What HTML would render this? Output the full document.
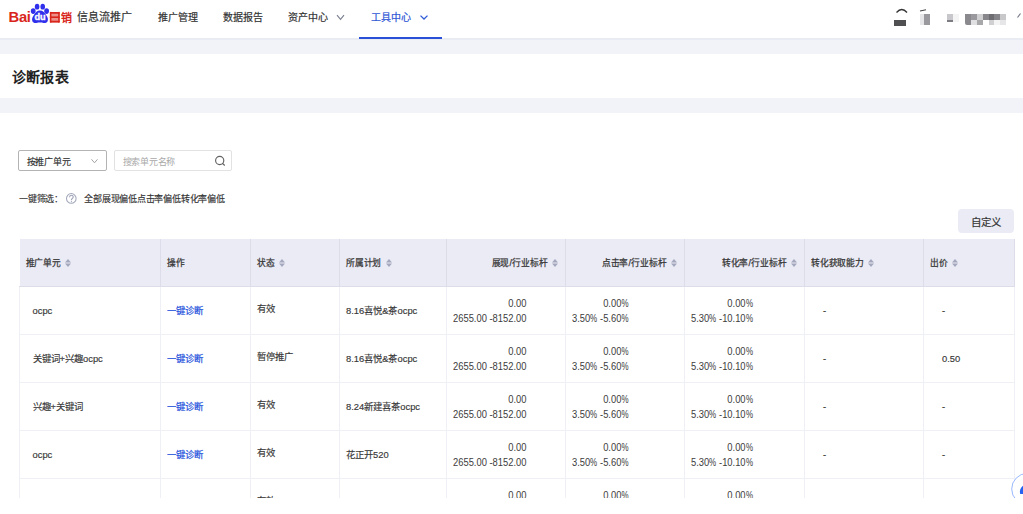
<!DOCTYPE html>
<html lang="zh-CN">
<head>
<meta charset="utf-8">
<style>
*{margin:0;padding:0;box-sizing:border-box;}
html,body{width:1023px;height:514px;overflow:hidden;background:#fff;}
body{font-family:"Liberation Sans",sans-serif;color:#333;position:relative;}
.abs{position:absolute;white-space:nowrap;}
body>svg{position:absolute;overflow:visible;}
#hdr{position:absolute;left:0;top:0;width:1023px;height:40px;background:#fff;border-bottom:2px solid #eaecf3;}
#band1{position:absolute;left:0;top:40px;width:1023px;height:14px;background:#f2f3f8;}
#band2{position:absolute;left:0;top:98px;width:1023px;height:15px;background:#f2f3f8;}
.nav{font-size:10px;color:#333;top:11px;line-height:13px;-webkit-text-stroke:0.2px currentColor;}
.navsel{color:#2d56d6;}
.title{font-size:14px;font-weight:bold;color:#222;left:11.5px;top:68.7px;line-height:17px;letter-spacing:0.35px;}
.sm{font-size:9px;line-height:11px;letter-spacing:-0.22px;}
.blk{position:absolute;}
.md{-webkit-text-stroke:0.15px currentColor;}
table{border-collapse:collapse;position:absolute;left:19px;top:239px;table-layout:fixed;}
th{background:#ebebf5;height:47px;font-size:8.75px;font-weight:normal;-webkit-text-stroke:0.25px #383838;color:#383838;text-align:left;padding:0 0 0 6px;letter-spacing:-0.2px;border-left:1px solid #dcdde9;border-bottom:1px solid #dcdde9;white-space:nowrap;}
th:first-child{border-left:none;}
th:last-child{border-right:1px solid #dcdde9;}
td{height:48px;font-size:9.4px;color:#383838;-webkit-text-stroke:0.15px currentColor;border-left:1px solid #efeff6;border-bottom:1px solid #efeff6;white-space:nowrap;padding:0 0 0 6px;}
td:first-child{padding-left:12.5px;}
td:last-child{border-right:1px solid #efeff6;}
.r{text-align:right;padding-right:7px;}
.so{display:inline-block;width:6px;height:8px;margin-left:4.5px;vertical-align:-1px;position:relative;top:0.25px;}
.lnk{color:#2350dc;-webkit-text-stroke:0.2px #2350dc;}
.num{display:inline-block;text-align:right;font-size:10.2px;line-height:14.5px;vertical-align:middle;padding-top:1px;position:relative;top:1px;transform:scaleX(0.92);transform-origin:0 50%;-webkit-text-stroke:0;color:#3c3c3c;}
.p{font-style:normal;display:inline-block;transform:scaleX(0.85);margin:0 -0.65px;}
.sl{font-style:normal;margin:0 0.5px 0 0.3px;}
.st{position:relative;top:-2px;}
</style>
</head>
<body>
<div id="hdr"></div>
<div id="band1"></div>
<div class="abs title">诊断报表</div>
<div id="band2"></div>

<!-- logo -->
<div class="abs" style="left:8.5px;top:10px;font-size:14.8px;font-weight:bold;color:#d9261c;line-height:15px;letter-spacing:-0.3px;">Bai</div>
<svg style="left:0;top:0;" width="80" height="30" viewBox="0 0 80 30">
  <ellipse cx="37.1" cy="6.7" rx="2.3" ry="2.9" fill="#3030ec"/>
  <ellipse cx="42.7" cy="6.7" rx="2.3" ry="2.9" fill="#3030ec"/>
  <ellipse cx="33.2" cy="11.1" rx="2.4" ry="2.8" fill="#3030ec"/>
  <ellipse cx="46.6" cy="11.1" rx="2.4" ry="2.8" fill="#3030ec"/>
  <path d="M40 10.6 C37.0 10.6 35.6 12.6 34.2 14.6 C32.5 16.9 31.6 18.8 32.3 21.0 C32.9 22.8 34.8 23.2 36.5 22.9 C38.5 22.5 41.5 22.5 43.5 22.9 C45.2 23.2 47.1 22.8 47.7 21.0 C48.4 18.8 47.5 16.9 45.8 14.6 C44.4 12.6 43.0 10.6 40 10.6 Z" fill="#3030ec"/>
  <text x="39.9" y="20.4" font-family="Liberation Sans" font-weight="bold" font-size="9.2" fill="#fff" stroke="#fff" stroke-width="0.35" text-anchor="middle" letter-spacing="-0.3">du</text>
</svg>
<svg style="left:0;top:0" width="10" height="10"><rect x="49.9" y="11.9" width="9.8" height="10.7" rx="1.2" fill="#eb9189"/><rect x="49.9" y="11.9" width="9.8" height="1.9" rx="0.8" fill="#d9261c"/><rect x="49.9" y="16.4" width="9.8" height="1.6" fill="#d9261c"/><rect x="49.9" y="20.7" width="9.8" height="1.9" rx="0.8" fill="#d9261c"/><rect x="49.9" y="11.9" width="1.5" height="10.7" fill="#d9261c"/><rect x="58.2" y="11.9" width="1.5" height="10.7" fill="#d9261c"/></svg>
<div class="abs" style="left:60.5px;top:10.5px;font-size:11px;font-weight:bold;color:#d9261c;line-height:14px;">销</div>
<div class="abs nav" style="left:77px;font-size:11px;top:11px;">信息流推广</div>
<div class="abs nav" style="left:157.5px;">推广管理</div>
<div class="abs nav" style="left:222.5px;">数据报告</div>
<div class="abs nav" style="left:287.5px;">资产中心</div>
<svg style="left:0;top:0" width="10" height="10"><path d="M337 15.2 L340.5 19.3 L344 15.2" fill="none" stroke="#7a7f90" stroke-width="1.1"/></svg>
<div class="abs nav navsel" style="left:370.5px;">工具中心</div>
<svg style="left:0;top:0" width="10" height="10"><path d="M420.5 15.6 L424 19 L427.5 15.6" fill="none" stroke="#2f5bd6" stroke-width="1.3"/></svg>
<div class="abs" style="left:359px;top:37px;width:83px;height:2px;background:#2a50d8;"></div>

<!-- right header pixelated -->
<svg style="left:0;top:0" width="10" height="10"><path d="M896.5 12.5 Q901.8 6.5 907 12.5" fill="none" stroke="#333" stroke-width="1.3"/></svg>
<div class="blk" style="left:894px;top:19.5px;width:12px;height:6.5px;background:#505052;"></div>
<svg style="left:0;top:0" width="10" height="10"><path d="M920 11 L926 9.8" fill="none" stroke="#444" stroke-width="1.1"/></svg>
<div class="blk" style="left:919.5px;top:14px;width:4px;height:11px;background:#e6e6e8;"></div>
<div class="blk" style="left:923.5px;top:14px;width:6px;height:11px;background:#9a9a9e;"></div>
<div class="blk" style="left:947px;top:14px;width:6px;height:6px;background:#c8c8cc;"></div>
<div class="blk" style="left:947px;top:19.5px;width:6px;height:2.5px;background:#7c7c82;"></div>
<div class="blk" style="left:953px;top:14px;width:6px;height:8px;background:#f4f4f4;"></div>
<div class="blk" style="left:965px;top:14px;width:6px;height:11px;background:#8a8a8e;border-bottom-left-radius:2px;"></div>
<div class="blk" style="left:971px;top:14px;width:6px;height:5.5px;background:#9a9a9e;"></div>
<div class="blk" style="left:977px;top:14px;width:6px;height:5.5px;background:#d0d0d2;"></div>
<div class="blk" style="left:983px;top:14px;width:5.5px;height:5.5px;background:#88888c;"></div>
<div class="blk" style="left:988.5px;top:14px;width:5.5px;height:5.5px;background:#6e6e72;"></div>
<div class="blk" style="left:994px;top:14px;width:6px;height:5.5px;background:#86868a;"></div>
<div class="blk" style="left:1000px;top:14px;width:6px;height:5.5px;background:#c8c8ca;"></div>
<div class="blk" style="left:971px;top:19.5px;width:6px;height:5.5px;background:#e0e0e2;"></div>
<div class="blk" style="left:977px;top:19.5px;width:6px;height:5.5px;background:#a8a8aa;"></div>
<div class="blk" style="left:988.5px;top:19.5px;width:5.5px;height:5.5px;background:#d0d0d2;"></div>
<div class="blk" style="left:994px;top:19.5px;width:6px;height:5.5px;background:#f4f4f4;"></div>
<div class="blk" style="left:1000px;top:19.5px;width:6px;height:5.5px;background:#e6e6e8;"></div>
<svg style="left:0;top:0" width="10" height="10"><path d="M1017.5 17.5 L1020.5 13.5" fill="none" stroke="#6a6f80" stroke-width="1.1"/></svg>

<!-- filters -->
<div class="abs" style="left:18px;top:150px;width:89px;height:21px;border:1px solid #b4b4b4;border-radius:2px;"></div>
<div class="abs sm md" style="left:26.7px;top:156.5px;">按推广单元</div>
<svg style="left:0;top:0" width="10" height="10"><path d="M91.5 159.3 L94.5 162.8 L97.5 159.3" fill="none" stroke="#999" stroke-width="0.9"/></svg>
<div class="abs" style="left:114px;top:150px;width:118px;height:21px;border:1px solid #e2e2e2;border-radius:2px;"></div>
<div class="abs sm" style="left:122.5px;top:156.5px;color:#a8a8a8;">搜索单元名称</div>
<svg style="left:0;top:0" width="10" height="10"><circle cx="219.7" cy="160.5" r="4.1" fill="none" stroke="#626262" stroke-width="1.15"/><path d="M222.6 163.5 L224.5 165.2" stroke="#626262" stroke-width="1.15" stroke-linecap="round"/></svg>
<div class="abs sm md" style="left:19px;top:193.5px;">一键筛选：</div>
<svg style="left:0;top:0" width="10" height="10"><circle cx="71.3" cy="198.4" r="4.8" fill="none" stroke="#a3a8bb" stroke-width="1.05"/><path d="M69.5 197.2 C69.5 194.6 73.2 194.6 73.2 197.0 C73.2 198.4 71.4 198.6 71.4 200.2" fill="none" stroke="#9a9fb3" stroke-width="1.05"/><circle cx="71.4" cy="201.6" r="0.6" fill="#9a9fb3"/></svg>
<div class="abs sm md" style="left:84.2px;top:193.5px;">全部展现偏低点击率偏低转化率偏低</div>

<div class="abs" style="left:958px;top:209px;width:56px;height:24px;background:#ebebf5;border-radius:4px;"></div>
<div class="abs" style="left:970.5px;top:215.5px;font-size:10.5px;line-height:13px;-webkit-text-stroke:0.2px #333;">自定义</div>

<table>
<colgroup><col style="width:141px"><col style="width:90px"><col style="width:89px"><col style="width:107px"><col style="width:119px"><col style="width:119px"><col style="width:120px"><col style="width:119px"><col style="width:91px"></colgroup>
<tr><th>推广单元<svg class="so" viewBox="0 0 6 8"><path d="M3 0 L6 3.6 L0 3.6Z M0 4.4 L6 4.4 L3 8Z" fill="#a3a8be"/></svg></th><th>操作</th><th>状态<svg class="so" viewBox="0 0 6 8"><path d="M3 0 L6 3.6 L0 3.6Z M0 4.4 L6 4.4 L3 8Z" fill="#a3a8be"/></svg></th><th>所属计划<svg class="so" viewBox="0 0 6 8"><path d="M3 0 L6 3.6 L0 3.6Z M0 4.4 L6 4.4 L3 8Z" fill="#a3a8be"/></svg></th><th class="r">展现<i class="sl">/</i>行业标杆<svg class="so" viewBox="0 0 6 8"><path d="M3 0 L6 3.6 L0 3.6Z M0 4.4 L6 4.4 L3 8Z" fill="#a3a8be"/></svg></th><th class="r">点击率<i class="sl">/</i>行业标杆<svg class="so" viewBox="0 0 6 8"><path d="M3 0 L6 3.6 L0 3.6Z M0 4.4 L6 4.4 L3 8Z" fill="#a3a8be"/></svg></th><th class="r">转化率<i class="sl">/</i>行业标杆<svg class="so" viewBox="0 0 6 8"><path d="M3 0 L6 3.6 L0 3.6Z M0 4.4 L6 4.4 L3 8Z" fill="#a3a8be"/></svg></th><th>转化获取能力<svg class="so" viewBox="0 0 6 8"><path d="M3 0 L6 3.6 L0 3.6Z M0 4.4 L6 4.4 L3 8Z" fill="#a3a8be"/></svg></th><th>出价<svg class="so" viewBox="0 0 6 8"><path d="M3 0 L6 3.6 L0 3.6Z M0 4.4 L6 4.4 L3 8Z" fill="#a3a8be"/></svg></th></tr>
<tr><td>ocpc</td><td class="lnk">一键诊断</td><td><span class="st">有效</span></td><td>8.16喜悦&amp;茶ocpc</td><td><span class="num">0.00<br>2655.00 -8152.00</span></td><td><span class="num">0.00<i class="p">%</i><br>3.50<i class="p">%</i> -5.60<i class="p">%</i></span></td><td><span class="num">0.00<i class="p">%</i><br>5.30<i class="p">%</i> -10.10<i class="p">%</i></span></td><td style="padding-left:18px">-</td><td style="padding-left:18px">-</td></tr>
<tr><td>关键词+兴趣ocpc</td><td class="lnk">一键诊断</td><td><span class="st">暂停推广</span></td><td>8.16喜悦&amp;茶ocpc</td><td><span class="num">0.00<br>2655.00 -8152.00</span></td><td><span class="num">0.00<i class="p">%</i><br>3.50<i class="p">%</i> -5.60<i class="p">%</i></span></td><td><span class="num">0.00<i class="p">%</i><br>5.30<i class="p">%</i> -10.10<i class="p">%</i></span></td><td style="padding-left:18px">-</td><td style="padding-left:18px">0.50</td></tr>
<tr><td>兴趣+关键词</td><td class="lnk">一键诊断</td><td><span class="st">有效</span></td><td>8.24新建喜茶ocpc</td><td><span class="num">0.00<br>2655.00 -8152.00</span></td><td><span class="num">0.00<i class="p">%</i><br>3.50<i class="p">%</i> -5.60<i class="p">%</i></span></td><td><span class="num">0.00<i class="p">%</i><br>5.30<i class="p">%</i> -10.10<i class="p">%</i></span></td><td style="padding-left:18px">-</td><td style="padding-left:18px">-</td></tr>
<tr><td>ocpc</td><td class="lnk">一键诊断</td><td><span class="st">有效</span></td><td>花正开520</td><td><span class="num">0.00<br>2655.00 -8152.00</span></td><td><span class="num">0.00<i class="p">%</i><br>3.50<i class="p">%</i> -5.60<i class="p">%</i></span></td><td><span class="num">0.00<i class="p">%</i><br>5.30<i class="p">%</i> -10.10<i class="p">%</i></span></td><td style="padding-left:18px">-</td><td style="padding-left:18px">-</td></tr>
<tr><td></td><td></td><td><span class="st">有效</span></td><td></td><td><span class="num">0.00<br>2655.00 -8152.00</span></td><td><span class="num">0.00<i class="p">%</i><br>3.50<i class="p">%</i> -5.60<i class="p">%</i></span></td><td><span class="num">0.00<i class="p">%</i><br>5.30<i class="p">%</i> -10.10<i class="p">%</i></span></td><td></td><td></td></tr>
</table>
<svg style="left:0;top:0" width="10" height="10"><circle cx="1027.3" cy="489" r="15.6" fill="#fff" stroke="#8fb0ff" stroke-width="0.9"/><path d="M1020.2 494 C1019.2 490.5 1020.8 487.3 1023 485.7 L1023 494 Z" fill="#2563f0"/></svg>
<div class="abs" style="left:0;top:498px;width:1023px;height:16px;background:#fff;"></div>
</body>
</html>
